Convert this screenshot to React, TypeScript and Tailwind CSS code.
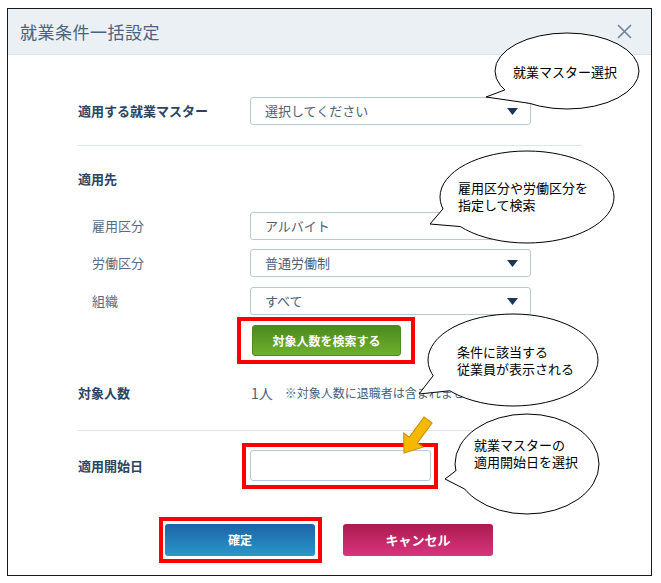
const jp = "font-['Noto_Sans_CJK_JP','Noto_Sans',sans-serif]";

type Callout = {
  cx: number;
  cy: number;
  rx: number;
  ry: number;
  a1: number;
  a2: number;
  tip: [number, number];
  left: number;
  top: number;
  lines: string[];
};

const callouts: Callout[] = [
  { cx: 567, cy: 71, rx: 72, ry: 38, a1: 150, a2: 122, tip: [486, 97], left: 513, top: 63, lines: ['就業マスター選択'] },
  { cx: 527, cy: 197, rx: 87, ry: 46, a1: 165, a2: 140, tip: [430, 224], left: 458, top: 179, lines: ['雇用区分や労働区分を', '指定して検索'] },
  { cx: 513, cy: 360, rx: 85, ry: 46, a1: 160, a2: 138, tip: [419, 394], left: 457, top: 343, lines: ['条件に該当する', '従業員が表示される'] },
  { cx: 527, cy: 464, rx: 72, ry: 50, a1: 172, a2: 150, tip: [445, 479], left: 474, top: 436, lines: ['就業マスターの', '適用開始日を選択'] },
];

const pt = (c: Callout, deg: number, shrink = 0): [number, number] => {
  const r = (deg * Math.PI) / 180;
  return [c.cx + (c.rx - shrink) * Math.cos(r), c.cy + (c.ry - shrink) * Math.sin(r)];
};

const s = (p: [number, number]) => `${p[0]},${p[1]}`;

function Caret() {
  return (
    <svg width="11" height="7" viewBox="0 0 11 7">
      <polygon points="0,0 11,0 5.5,7" fill="#1d3656" />
    </svg>
  );
}

function Field({ text, caret = true, w = 'w-[281px]' }: { text: string; caret?: boolean; w?: string }) {
  return (
    <div className={`${w} h-[28px] border border-[#b6cadc] rounded-[3px] bg-white flex items-center justify-between pl-[14px] pr-[12px] text-[13px] text-[#4b5f78]`}>
      <span>{text}</span>
      {caret && <Caret />}
    </div>
  );
}

export default function App() {
  return (
    <div className={`relative w-[661px] h-[583px] bg-white overflow-hidden pt-[8px] pl-[7px] ${jp}`}>
      <div className="w-[645px] h-[568px] border border-[#1a1a1a] flex flex-col">
        {/* header */}
        <div className="h-[46px] bg-[#ebf0f4] border-b border-[#dbe3ea] flex items-center justify-between pl-[12px] pr-[19px]">
          <span className="text-[17px] text-[#4a6282] tracking-[0.5px]">就業条件一括設定</span>
          <svg width="15" height="15" viewBox="0 0 15 15">
            <path d="M1 1 L14 14 M14 1 L1 14" stroke="#6d8199" strokeWidth="1.6" />
          </svg>
        </div>

        {/* body */}
        <div className="pl-[70px] flex flex-col">
          <div className="mt-[42px] flex items-center">
            <div className="w-[172px] text-[13px] font-bold text-[#2c4462]">適用する就業マスター</div>
            <Field text="選択してください" />
          </div>

          <div className="mt-[20px] w-[504px] h-px bg-[#dfe5eb]" />

          <div className="mt-[23px] h-[20px] flex items-center text-[13px] font-bold text-[#2c4462]">適用先</div>

          <div className="mt-[23px] flex items-center">
            <div className="w-[172px] pl-[14px] text-[13px] text-[#566c86]">雇用区分</div>
            <Field text="アルバイト" />
          </div>
          <div className="mt-[9px] flex items-center">
            <div className="w-[172px] pl-[14px] text-[13px] text-[#566c86]">労働区分</div>
            <Field text="普通労働制" />
          </div>
          <div className="mt-[10px] flex items-center">
            <div className="w-[172px] pl-[14px] text-[13px] text-[#566c86]">組織</div>
            <Field text="すべて" />
          </div>

          <div className="mt-[10px] pl-[174px]">
            <button className="w-[149px] h-[31px] rounded-[3px] bg-linear-to-b from-[#4a8a1d] to-[#6fb02e] text-white text-[12px] font-bold border border-[#4d8a22]">
              対象人数を検索する
            </button>
          </div>

          <div className="mt-[27px] h-[20px] flex items-center">
            <div className="w-[173px] text-[13px] font-bold text-[#2c4462]">対象人数</div>
            <span className="text-[14px] text-[#4b5f78]">1人</span>
            <span className="ml-[12px] text-[12px] text-[#4b5f78]">※対象人数に退職者は含まれません</span>
          </div>

          <div className="mt-[27px] w-[504px] h-px bg-[#dfe5eb]" />

          <div className="mt-[19px] flex items-center">
            <div className="w-[172px] text-[13px] font-bold text-[#2c4462]">適用開始日</div>
            <div className="w-[181px] h-[31px] border border-[#b6cadc] rounded-[3px] bg-white" />
          </div>
        </div>

        <div className="mt-[43px] flex justify-center gap-[28px] pr-[1px]">
          <button className="w-[150px] h-[32px] rounded-[3px] bg-linear-to-b from-[#1e63a6] to-[#2a98c9] text-white text-[12px] font-bold">
            確定
          </button>
          <button className="w-[150px] h-[32px] rounded-[3px] bg-linear-to-b from-[#ad1a4f] to-[#d8347f] text-white text-[13px] font-bold">
            キャンセル
          </button>
        </div>
      </div>

      {/* red highlight frames */}
      <div className="absolute left-[237px] top-[317px] w-[178px] h-[47px] border-[4px] border-[#ff0000]" />
      <div className="absolute left-[242px] top-[443px] w-[196px] h-[46px] border-[4px] border-[#ff0000]" />
      <div className="absolute left-[159px] top-[517px] w-[163px] h-[46px] border-[4px] border-[#ff0000]" />

      {/* callouts + arrow */}
      <svg className="absolute left-0 top-0 pointer-events-none" width="661" height="583">
        {callouts.map((c, i) => {
          const p1 = pt(c, c.a1);
          const p2 = pt(c, c.a2);
          const p1i = pt(c, c.a1, 4);
          const p2i = pt(c, c.a2, 4);
          return (
            <g key={i}>
              <ellipse cx={c.cx} cy={c.cy} rx={c.rx} ry={c.ry} fill="white" stroke="#000" strokeWidth="1" />
              <polygon points={`${s(p1i)} ${s(p1)} ${s(c.tip)} ${s(p2)} ${s(p2i)}`} fill="white" />
              <polyline points={`${s(p1)} ${s(c.tip)} ${s(p2)}`} fill="none" stroke="#000" strokeWidth="1" />
            </g>
          );
        })}
        <g transform="translate(404 453) rotate(36)">
          <polygon points="0,0 -12,-16 -5,-16 -5,-41 5,-41 5,-16 12,-16" fill="#f6b800" stroke="#c98f00" strokeWidth="1" />
        </g>
      </svg>
      {callouts.map((c, i) => (
        <div
          key={i}
          className="absolute whitespace-nowrap text-[13px] leading-[17px] text-black"
          style={{ left: c.left, top: c.top }}
        >
          {c.lines.map((l) => (
            <div key={l}>{l}</div>
          ))}
        </div>
      ))}
    </div>
  );
}
